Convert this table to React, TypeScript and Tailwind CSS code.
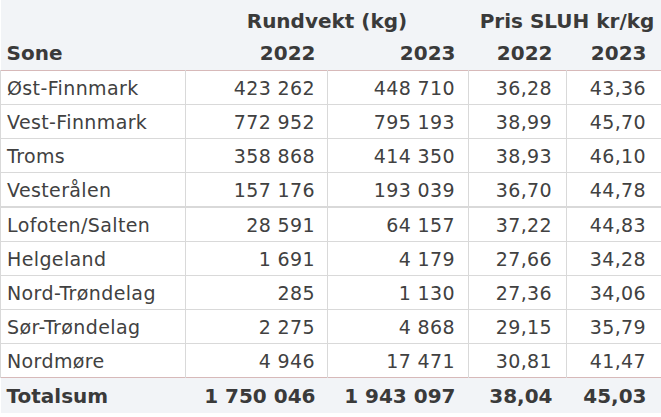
type Row = {
  sone: string;
  r22: string;
  r23: string;
  p22: string;
  p23: string;
};

const rows: Row[] = [
  { sone: "Øst-Finnmark", r22: "423 262", r23: "448 710", p22: "36,28", p23: "43,36" },
  { sone: "Vest-Finnmark", r22: "772 952", r23: "795 193", p22: "38,99", p23: "45,70" },
  { sone: "Troms", r22: "358 868", r23: "414 350", p22: "38,93", p23: "46,10" },
  { sone: "Vesterålen", r22: "157 176", r23: "193 039", p22: "36,70", p23: "44,78" },
  { sone: "Lofoten/Salten", r22: "28 591", r23: "64 157", p22: "37,22", p23: "44,83" },
  { sone: "Helgeland", r22: "1 691", r23: "4 179", p22: "27,66", p23: "34,28" },
  { sone: "Nord-Trøndelag", r22: "285", r23: "1 130", p22: "27,36", p23: "34,06" },
  { sone: "Sør-Trøndelag", r22: "2 275", r23: "4 868", p22: "29,15", p23: "35,79" },
  { sone: "Nordmøre", r22: "4 946", r23: "17 471", p22: "30,81", p23: "41,47" },
];

export default function App() {
  return (
    <div className="w-[661px] h-[417px] overflow-hidden bg-white font-['DejaVu_Sans',sans-serif] text-[19px] tracking-[0.02em] text-[#414141]">
      <table className="w-[661px] table-fixed border-collapse">
        <colgroup>
          <col className="w-[185px]" />
          <col className="w-[142px]" />
          <col className="w-[141px]" />
          <col className="w-[98px]" />
          <col className="w-[95px]" />
        </colgroup>
        <thead className="bg-[#f2f4f7] font-bold text-[20px] tracking-normal text-[#3a3a3a]">
          <tr className="h-[37px]">
            <th />
            <th colSpan={2} className="text-center pt-1 whitespace-nowrap">Rundvekt (kg)</th>
            <th colSpan={2} className="text-center pt-1 pl-1 whitespace-nowrap">Pris SLUH kr/kg</th>
          </tr>
          <tr className="h-[33px] border-b border-[#d7b9b9]">
            <th className="text-left pl-[6px]">Sone</th>
            <th className="text-right pr-[12px]">2022</th>
            <th className="text-right pr-[13px]">2023</th>
            <th className="text-right pr-[14px]">2022</th>
            <th className="text-right pr-[15px]">2023</th>
          </tr>
        </thead>
        <tbody>
          {rows.map((r, i) => (
            <tr
              key={r.sone}
              className={
                i === 3
                  ? "h-[35px] border-b-2 border-[#d9d9d9]"
                  : i === rows.length - 1
                    ? "h-[34px]"
                    : "h-[34px] border-b border-[#d9d9d9]"
              }
            >
              <td className="pl-[6px] pt-[2px] border-x border-[#d9d9d9] whitespace-nowrap">{r.sone}</td>
              <td className="text-right pr-[12px] pt-[2px] border-r border-[#d9d9d9]">{r.r22}</td>
              <td className="text-right pr-[13px] pt-[2px] border-r border-[#d9d9d9]">{r.r23}</td>
              <td className="text-right pr-[14px] pt-[2px] border-r border-[#d9d9d9]">{r.p22}</td>
              <td className="text-right pr-[15px] pt-[2px] border-r border-[#d9d9d9]">{r.p23}</td>
            </tr>
          ))}
        </tbody>
        <tfoot className="bg-[#f2f4f7] font-bold text-[20px] tracking-normal text-[#3a3a3a]">
          <tr className="h-[36px] border-t border-[#d7b9b9]">
            <td className="pl-[6px] pt-[2px]">Totalsum</td>
            <td className="text-right pr-[12px] pt-[2px] whitespace-nowrap">1 750 046</td>
            <td className="text-right pr-[13px] pt-[2px] whitespace-nowrap">1 943 097</td>
            <td className="text-right pr-[14px] pt-[2px]">38,04</td>
            <td className="text-right pr-[15px] pt-[2px]">45,03</td>
          </tr>
        </tfoot>
      </table>
    </div>
  );
}
